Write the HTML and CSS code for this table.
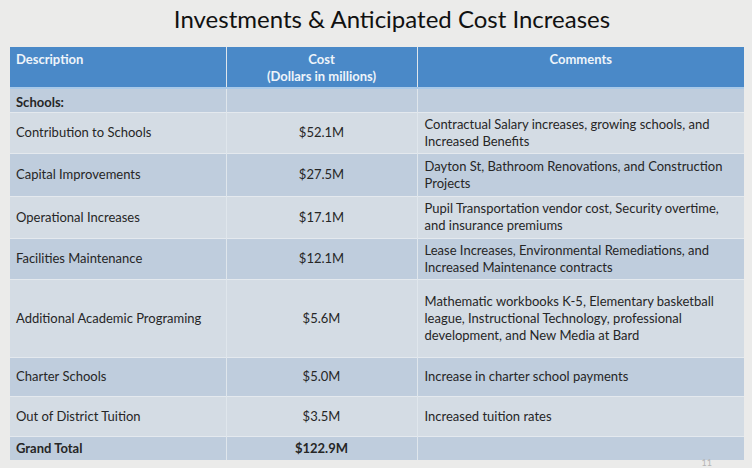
FILE: index.html
```html
<!DOCTYPE html>
<html>
<head>
<meta charset="utf-8">
<link rel="stylesheet" href="styles.css">
</head>
<body>
<div class="slide">
  <h1 class="title">Investments &amp; Anticipated Cost Increases</h1>
  <table class="budget">
    <colgroup>
      <col class="c-desc"><col class="c-cost"><col class="c-comm">
    </colgroup>
    <thead>
      <tr class="head">
        <th class="left">Description</th>
        <th>Cost<br>(Dollars in millions)</th>
        <th>Comments</th>
      </tr>
    </thead>
    <tbody>
      <tr class="dark h24 low"><td class="bold">Schools:</td><td></td><td></td></tr>
      <tr class="light h41"><td>Contribution to Schools</td><td class="cost">$52.1M</td><td>Contractual Salary increases, growing schools, and Increased Benefits</td></tr>
      <tr class="dark h43"><td>Capital Improvements</td><td class="cost">$27.5M</td><td>Dayton St, Bathroom Renovations, and Construction Projects</td></tr>
      <tr class="light h42"><td>Operational Increases</td><td class="cost">$17.1M</td><td>Pupil Transportation vendor cost, Security overtime, and insurance premiums</td></tr>
      <tr class="dark h41"><td>Facilities Maintenance</td><td class="cost">$12.1M</td><td>Lease Increases, Environmental Remediations, and Increased Maintenance contracts</td></tr>
      <tr class="light h78"><td>Additional Academic Programing</td><td class="cost">$5.6M</td><td>Mathematic workbooks K-5, Elementary basketball league, Instructional Technology, professional development, and New Media at Bard</td></tr>
      <tr class="dark h39"><td>Charter Schools</td><td class="cost">$5.0M</td><td>Increase in charter school payments</td></tr>
      <tr class="light h40"><td>Out of District Tuition</td><td class="cost">$3.5M</td><td>Increased tuition rates</td></tr>
      <tr class="dark h24"><td class="bold">Grand Total</td><td class="cost bold">$122.9M</td><td></td></tr>
    </tbody>
  </table>
  <div class="pagenum">11</div>
</div>
</body>
</html>
```

FILE: styles.css
```css
html, body {
  margin: 0;
  padding: 0;
  background: #ebebea;
}
.slide {
  width: 752px;
  height: 468px;
  overflow: hidden;
  position: relative;
  font-family: "Lato", "Open Sans", sans-serif;
  color: #262626;
}
.title {
  margin: 0;
  height: 47px;
  box-sizing: border-box;
  padding-top: 4px;
  padding-left: 32px;
  text-align: center;
  font-weight: 400;
  font-size: 24px;
  line-height: 30px;
  color: #111;
  letter-spacing: 0;
}
.budget {
  margin-left: 10px;
  width: 734px;
  border-collapse: collapse;
  table-layout: fixed;
  font-size: 13px;
}
.c-desc { width: 216px; }
.c-cost { width: 191px; }
.c-comm { width: 327px; }
.budget th, .budget td {
  padding: 0 6px;
  border-left: 1px solid #dfe6ec;
  border-right: 1px solid #dfe6ec;
  border-top: 1px solid #e4e9ee;
  vertical-align: middle;
  line-height: 17px;
}
.budget th {
  background: #4a89c8;
  color: #eef4fa;
  font-weight: 700;
  font-size: 13px;
  vertical-align: top;
  padding-top: 4px;
  height: 41px;
  box-sizing: border-box;
  border-top: none;
  border-bottom: 2px solid #a9c9e8;
  text-align: center;
  line-height: 17px;
}
.budget th.left { text-align: left; }
.budget th:first-child, .budget td:first-child { border-left: none; }
.budget th:last-child, .budget td:last-child { border-right: none; }
.budget td:last-child { padding-left: 7px; }
.dark td { background: #bfcddd; }
.light td { background: #d4dce4; }
.low td { padding-top: 5px; }
.cost { text-align: center; }
.bold { font-weight: 700; }
.h24 td { height: 24px; }
.h39 td { height: 39px; }
.h40 td { height: 40px; }
.h41 td { height: 41px; }
.h42 td { height: 42px; }
.h43 td { height: 43px; }
.h78 td { height: 78px; }
.budget td { box-sizing: border-box; }
.pagenum {
  position: absolute;
  right: 40px;
  bottom: 0;
  font-size: 9px;
  line-height: 10px;
  color: #b5b5b5;
}
```
